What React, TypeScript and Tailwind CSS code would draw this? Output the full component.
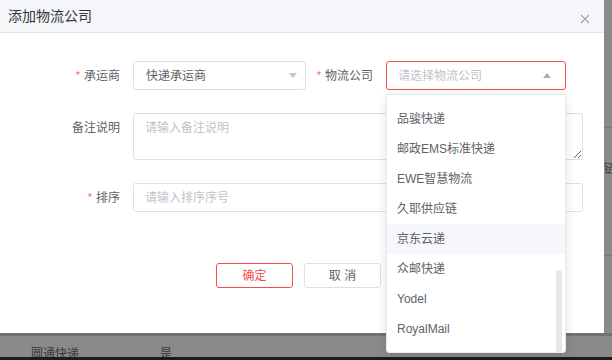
import React from 'react';

const carriers = ['品骏快递', '邮政EMS标准快递', 'EWE智慧物流', '久耶供应链', '京东云递', '众邮快递', 'Yodel', 'RoyalMail'];

const font = { fontFamily: '"Liberation Sans", "Noto Sans CJK SC", sans-serif' };

function Caret({ up }: { up?: boolean }) {
  return (
    <svg width="8" height="5" viewBox="0 0 8 5" className={up ? 'rotate-180' : ''}>
      <path d="M0 0 L8 0 L4 5 Z" fill={up ? '#a8abb2' : '#c0c4cc'} />
    </svg>
  );
}

function Label({ text, required, width }: { text: string; required?: boolean; width: string }) {
  return (
    <div className={`${width} shrink-0 h-[29px] flex items-center justify-end pr-[13px] text-[12px] text-[#606266]`}>
      {required && <span className="text-[#f56c6c] mr-[4px] text-[11px]">*</span>}
      {text}
    </div>
  );
}

export default function App() {
  return (
    <div className="w-[612px] h-[360px] overflow-hidden bg-[#8a8a8a] flex flex-col" style={font}>
      <div className="flex h-[333px] shrink-0">
        {/* Modal */}
        <div className="w-[604px] h-[333px] bg-white shrink-0 flex flex-col relative z-10">
          <div className="h-[33px] bg-[#f4f6f9] border-b border-[#dfe3ea] flex items-center justify-between pl-[8px] pr-[14px]">
            <span className="text-[14px] text-[#333]">添加物流公司</span>
            <svg width="10" height="10" viewBox="0 0 10 10" className="mt-[5px]">
              <path d="M1 1 L9 9 M9 1 L1 9" stroke="#a0a4ab" strokeWidth="1.1" />
            </svg>
          </div>

          <div className="pt-[28px] flex flex-col">
            <div className="flex items-start">
              <Label text="承运商" required width="w-[133px]" />
              <div className="w-[173px] h-[29px] border border-[#dcdfe6] rounded-[3px] flex items-center justify-between pl-[12px] pr-[8px] text-[12px] text-[#606266]">
                <span>快递承运商</span>
                <Caret />
              </div>
              <Label text="物流公司" required width="w-[80px]" />
              <div className="relative w-[180px]">
                <div className="h-[29px] border border-[#f34d4d] rounded-[3px] flex items-center justify-between pl-[11px] pr-[14px] text-[12px] text-[#c0c4cc]">
                  <span>请选择物流公司</span>
                  <Caret up />
                </div>
                {/* Dropdown */}
                <div className="absolute left-0 top-[33px] w-[180px] h-[259px] bg-white border border-[#e8ebf0] rounded-[3px] shadow-[0_2px_10px_rgba(0,0,0,0.12)] overflow-hidden z-20">
                  <div className="pt-[9px] flex flex-col">
                    {carriers.map((c) => (
                      <div
                        key={c}
                        className={`h-[30px] flex items-center pl-[10px] text-[12px] text-[#606266] ${c === '京东云递' ? 'bg-[#f5f7fa]' : ''}`}
                      >
                        {c}
                      </div>
                    ))}
                  </div>
                  <div className="absolute right-[3px] top-[175px] w-[6px] h-[83px] rounded-full bg-[#e4e7ed]" />
                </div>
              </div>
            </div>

            <div className="flex items-start mt-[23px]">
              <Label text="备注说明" width="w-[133px]" />
              <textarea
                readOnly
                placeholder="请输入备注说明"
                className="w-[450px] h-[47px] border border-[#dcdfe6] rounded-[3px] px-[11px] py-[5px] text-[12px] text-[#606266] placeholder:text-[#c0c4cc] outline-none leading-[18px]"
              />
            </div>

            <div className="flex items-start mt-[23px]">
              <Label text="排序" required width="w-[133px]" />
              <input
                readOnly
                placeholder="请输入排序序号"
                className="w-[450px] h-[29px] border border-[#dcdfe6] rounded-[3px] px-[11px] text-[12px] text-[#606266] placeholder:text-[#c0c4cc] outline-none"
              />
            </div>

            <div className="flex gap-[11px] ml-[216px] mt-[51px]">
              <button className="w-[77px] h-[25px] border border-[#f34d4d] rounded-[3px] text-[12px] text-[#f34d4d] bg-white">确定</button>
              <button className="w-[77px] h-[25px] border border-[#dcdfe6] rounded-[3px] text-[12px] text-[#606266] bg-white">取 消</button>
            </div>
          </div>
        </div>

        {/* background page slice on the right */}
        <div className="w-[8px] flex flex-col overflow-hidden">
          <div className="h-[128px] border-b border-[#7a7a7a]" />
          <div className="h-[128px] border-b border-[#7a7a7a] pt-[32px] text-[12px] text-[#3c3c3c] whitespace-nowrap">链</div>
        </div>
      </div>

      {/* background table row */}
      <div className="flex-1 border-t-[3px] border-[#727272] flex items-end pl-[31px] text-[12px] text-[#3a3a3a] overflow-hidden">
        <span className="translate-y-[6px]">圆通快递</span>
        <span className="ml-[81px] translate-y-[6px]">是</span>
      </div>
      <div className="h-[3px] bg-[#1c1c1c]" />
    </div>
  );
}
